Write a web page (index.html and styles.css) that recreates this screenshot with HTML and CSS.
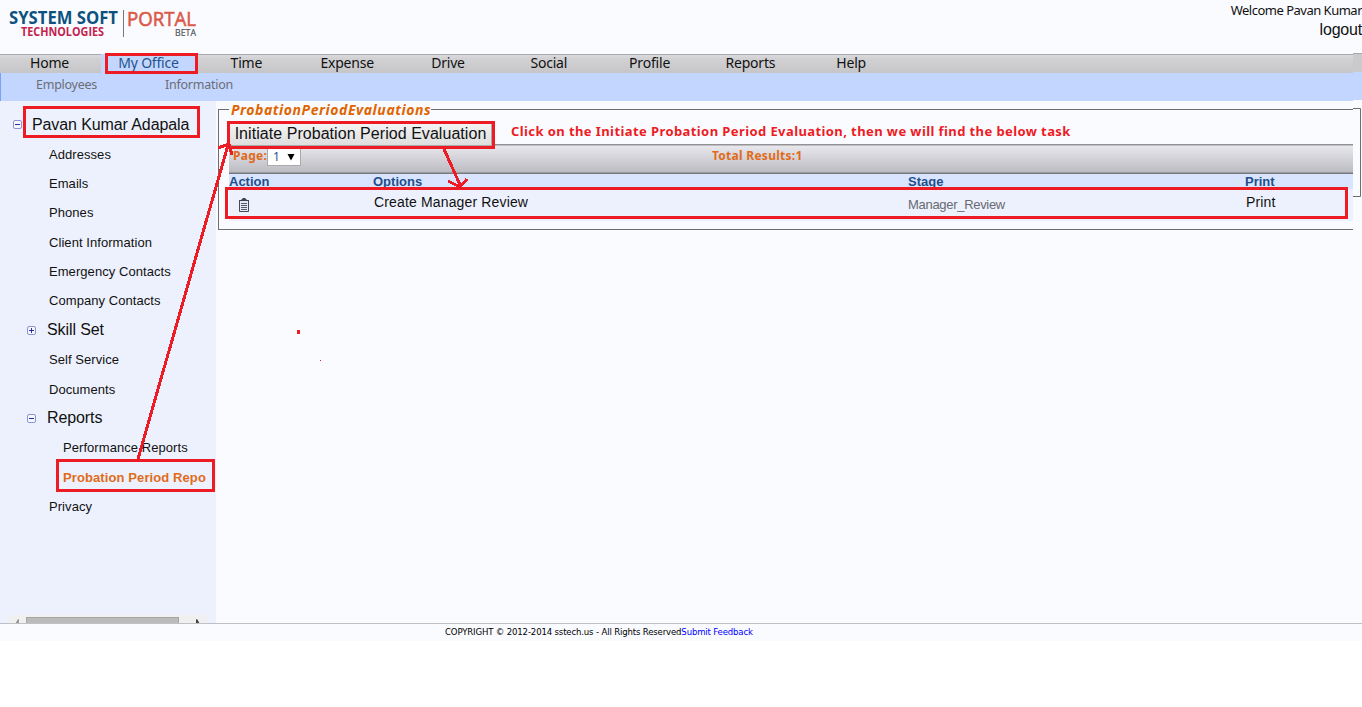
FILE: index.html
```
<!DOCTYPE html>
<html lang="en">
<head>
<meta charset="utf-8">
<title>System Soft Portal</title>
<link rel="stylesheet" href="styles.css">
</head>
<body>
<div class="page">
  <header class="header">
    <svg class="logo" width="210" height="44" viewBox="0 0 210 44">
      <text x="9" y="24" class="logo-main" textLength="109" lengthAdjust="spacingAndGlyphs">SYSTEM SOFT</text>
      <text x="21" y="36" class="logo-tech" textLength="83" lengthAdjust="spacingAndGlyphs">TECHNOLOGIES</text>
      <path d="M123.500 10V37" stroke="#777"/>
      <text x="127" y="26" class="logo-portal" textLength="69" lengthAdjust="spacingAndGlyphs">PORTAL</text>
      <text x="175" y="36" class="logo-beta" textLength="21" lengthAdjust="spacingAndGlyphs">BETA</text>
    </svg>
    <div class="account"><div class="welcome">Welcome Pavan Kumar</div><div class="logout">logout</div></div>
  </header>
  <nav class="nav">
    <span>Home</span><span class="current">My Office</span><span>Time</span><span>Expense</span><span>Drive</span><span>Social</span><span>Profile</span><span>Reports</span><span>Help</span>
  </nav>
  <div class="subnav"><span>Employees</span><span>Information</span></div>
  <div class="body">
    <aside class="sidebar">
      <div class="tree">
        <div class="row root"><i class="toggle"></i><span>Pavan Kumar Adapala</span></div>
        <div class="row leaf">Addresses</div>
        <div class="row leaf">Emails</div>
        <div class="row leaf">Phones</div>
        <div class="row leaf">Client Information</div>
        <div class="row leaf">Emergency Contacts</div>
        <div class="row leaf">Company Contacts</div>
        <div class="row group"><i class="toggle plus"></i><span>Skill Set</span></div>
        <div class="row leaf">Self Service</div>
        <div class="row leaf">Documents</div>
        <div class="row group"><i class="toggle"></i><span>Reports</span></div>
        <div class="row deep">Performance Reports</div>
        <div class="row deep selected">Probation Period Repo</div>
        <div class="row leaf">Privacy</div>
      </div>
      <svg class="scroll" width="198" height="8" viewBox="0 0 198 8">
        <path d="M0 0H198V8H0z" fill="#f0f0f0"/><path d="M17 2H170V8H17z" fill="#a6a6a6"/><path d="M18 3H169V8H18z" fill="#bbb"/>
        <path d="M10 4V8H7V7L8 6V5z" fill="#999"/><path d="M187 4V8H190V7L189 6V5z" fill="#444"/>
      </svg>
    </aside>
    <main class="main">
      <section class="panel">
        <h1 class="legend">ProbationPeriodEvaluations</h1>
        <div class="toolbar"><button class="initiate">Initiate Probation Period Evaluation</button><span class="hint">Click on the Initiate Probation Period Evaluation, then we will find the below task</span></div>
        <div class="grid">
          <div class="pager"><span class="page-label">Page:</span><span class="select"><span>1</span><svg width="8" height="7" viewBox="0 0 8 7"><path d="M0.500 0H7.500L4 6.500z"/></svg></span><span class="total">Total Results:1</span></div>
          <div class="cols head"><span>Action</span><span>Options</span><span>Stage</span><span>Print</span></div>
          <div class="cols record">
            <span class="clip"><svg width="12" height="14" viewBox="0 0 12 14"><path d="M1.500 2.500H10.500V13.500H1.500z" fill="#e6eaf2" stroke="#444a58"/><path d="M1 2H3L5 0H7L9 2H11V3H1z" fill="#3b4254"/><path d="M3 5.500H9M3 7.500H9M3 9.500H9M3 11.500H9" stroke="#555b69"/></svg></span>
            <span>Create Manager Review</span><span class="stage">Manager_Review</span><span>Print</span>
          </div>
        </div>
      </section>
    </main>
  </div>
  <footer class="footer"><span>COPYRIGHT © 2012-2014 sstech.us - All Rights Reserved</span><a>Submit Feedback</a></footer>
  <svg class="edge" width="9" height="642" viewBox="0 0 9 642">
    <path d="M0 53H9V101H0z" fill="#fafbff"/><path d="M0 53H9V72H0z" fill="#cacacd"/><path d="M0 53.500H9" stroke="#aaaaad"/><path d="M0 72H9V100H0z" fill="#c3d6ff"/>
    <path d="M0 108.500H7.500V196.500H0" fill="none" stroke="#6d6d70"/>
  </svg>
  <svg class="marks" width="1362" height="707" viewBox="0 0 1362 707" shape-rendering="crispEdges">
    <g fill="none" stroke="#ed1c24" stroke-width="3">
      <path d="M106.500 54.500H196.500V72.500H106.500z"/><path d="M24.500 107.500H198.500V136.500H24.500z"/>
      <path d="M228.500 122.500H493.500V147.500H228.500z"/><path d="M226.500 188.500H1346.500V217.500H226.500z"/>
      <path d="M57.500 460.500H213.500V490.500H57.500z"/>
      <path d="M138 459L228 145M218 148L229 144L232 155M444 149L461 187M448 181L460 187L467 179"/>
    </g>
    <path d="M297 330H300V334H297zM320 360H321V361H320z" fill="#ed1c24"/>
  </svg>
</div>
</body>
</html>
```
FILE: styles.css
```
* { box-sizing: border-box; }
body { margin: 0; background: #fff; font-family: "Liberation Sans", Arial, sans-serif; color: #111; }
.page { position: relative; width: 1362px; height: 707px; overflow: hidden; white-space: nowrap; }
.header { height: 54px; background: #fafbff; display: flex; justify-content: space-between; }
.logo { overflow: visible; }
.logo text { font-family: "Open Sans", "Noto Sans", sans-serif; }
.logo .logo-main { font-size: 18px; font-weight: 700; fill: #0d527e; }
.logo .logo-tech { font-size: 11.5px; font-weight: 700; fill: #c51f4d; }
.logo .logo-portal { font-size: 20.5px; fill: #dc5848; stroke: #dc5848; stroke-width: .6px; }
.logo .logo-beta { font-size: 9.5px; fill: #555; stroke: #555; stroke-width: .2px; }
.account { text-align: right; }
.welcome { font: 13px/21px "Noto Sans", sans-serif; letter-spacing: -.5px; }
.logout { font: 16px/17px "Liberation Sans", sans-serif; letter-spacing: -.2px; }
.nav { height: 19px; display: grid; grid-template-columns: 101px 96px repeat(7, 100.800px); background: linear-gradient(#a9a9ac 0 1px, #dcdce0 1px, #d2d2d5 4px, #c6c6c9); font: 14px/17px "Noto Sans", sans-serif; letter-spacing: -.2px; text-align: center; }
.nav span { padding-right: 2px; }
.nav .current { color: #24548c; background: #c3d6ff; padding-right: 1px; }
.subnav { height: 28px; background: #c3d6ff; border-left: 1px solid #78a4f3; display: flex; padding-left: 35px; font: 12.500px/23px "Noto Sans", sans-serif; letter-spacing: -.25px; color: #6b6d75; }
.subnav span { width: 129px; }
.body { height: 522px; display: flex; background: #fafbff; }
.sidebar { width: 216px; background: #edf1fd; display: flex; flex-direction: column; justify-content: space-between; padding-top: 9px; }
.tree { display: grid; grid-auto-rows: 29.380px; }
.row { display: flex; align-items: center; font-size: 13px; letter-spacing: .06px; }
.root, .group { font-size: 16px; letter-spacing: -.1px; }
.root { padding-left: 13px; }
.root span { padding-left: 10px; }
.leaf { padding-left: 49px; }
.group { padding-left: 27px; }
.group span { padding-left: 11px; }
.deep { padding-left: 63px; }
.selected { color: #e06b1a; font-weight: 700; letter-spacing: .1px; }
.toggle { width: 9px; height: 9px; border: 1px solid #8c94d2; border-radius: 2px; background: linear-gradient(#2929b5, #2929b5) center / 5px 1px no-repeat, #f5f7ff; }
.plus { background: linear-gradient(#2929b5, #2929b5) center / 5px 1px no-repeat, linear-gradient(#2929b5, #2929b5) center / 1px 5px no-repeat, #f5f7ff; }
.scroll { display: block; margin-left: 9px; }
.main { flex: 1; padding: 8px 9px 0 2px; }
.panel { height: 121px; border: 1px solid #6d6d70; border-right: 0; padding-left: 10px; }
.legend { margin: -9px 0 0 0; width: 202px; padding-left: 2px; background: #fafbff; color: #e06500; font: italic 700 14px/18px "Noto Sans", sans-serif; letter-spacing: .56px; }
.toolbar { height: 25px; padding-top: 2px; display: flex; }
.initiate { width: 263px; height: 25px; padding: 0; border: 1px solid #aaa; background: linear-gradient(#f5f5f5, #dedede); font: 16px/22px "Liberation Sans", sans-serif; letter-spacing: .05px; color: #111; }
.hint { padding-left: 19px; color: #ed1c24; font: 700 13px/20px "Noto Sans", sans-serif; letter-spacing: .41px; }
.pager { height: 30px; display: grid; grid-template-columns: 38px 34px 1fr; background: linear-gradient(#929297 0 1px, #e7e7ec 2px, #bcbcc3 28px, #77777d 29px); color: #e06b1a; font: 700 12px/24px "Noto Sans", sans-serif; letter-spacing: .27px; }
.page-label { padding-left: 4px; }
.select { height: 18px; margin-top: 4px; background: #fff; border: 1px solid #aaa; display: flex; align-items: center; justify-content: space-between; padding: 0 5px; color: #24548c; font-weight: 400; }
.total { padding-left: 411px; }
.cols { display: grid; grid-template-columns: 144px 535px 337px 1fr; }
.head { height: 15px; background: #d9e5ff; color: #1d4f8c; font: 700 13px/16px "Liberation Sans", sans-serif; }
.record { height: 32px; background: #edf1fd; font-size: 14px; line-height: 27px; padding-left: 1px; letter-spacing: .15px; }
.clip { padding: 9px 0 0 8px; line-height: 0; }
.stage { font-size: 13px; line-height: 32px; color: #686a70; margin-left: -1px; letter-spacing: -.3px; }
.footer { height: 18px; background: #fafbff; border-top: 1px solid #bfc0c5; padding-left: 445px; font: 9.500px/16px "DejaVu Sans Condensed", "DejaVu Sans", sans-serif; letter-spacing: -.15px; color: #000; }
.footer a { color: #00f; }
.edge { position: absolute; left: 1353px; top: 0; }
.marks { position: absolute; left: 0; top: 0; }
```
